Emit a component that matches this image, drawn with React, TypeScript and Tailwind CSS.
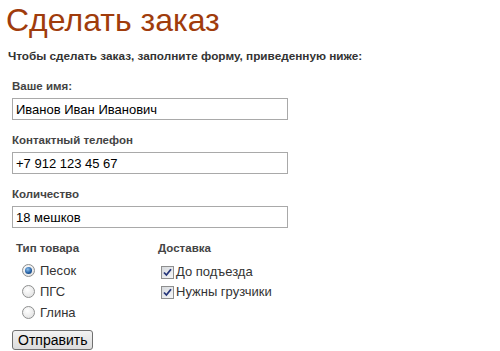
import React, { useState } from 'react'

// Radio in the old XP/Win7 look: grey ring, blue dot when picked
function Radio({ checked, label, onClick }: { checked: boolean; label: string; onClick: () => void }) {
  return (
    <label className="flex h-[21px] items-center cursor-pointer" onClick={onClick}>
      <span className="ml-[6px] flex h-[13px] w-[13px] items-center justify-center rounded-full border border-[#8e8f8f] bg-[radial-gradient(circle_at_40%_35%,#ffffff,#dcdcdc)]">
        {checked && (
          <span className="h-[7px] w-[7px] rounded-full bg-[radial-gradient(circle_at_40%_35%,#8ec2f0,#1f5a9e_60%,#10335f)]" />
        )}
      </span>
      <span className="ml-[5px] text-[13px] leading-[16px] text-[#333]">{label}</span>
    </label>
  )
}

function Check({ checked, label, onClick }: { checked: boolean; label: string; onClick: () => void }) {
  return (
    <label className="flex h-[20px] items-center cursor-pointer" onClick={onClick}>
      <span className="ml-[3px] flex h-[13px] w-[13px] items-center justify-center border border-[#8e8f8f] bg-[linear-gradient(135deg,#d6d9dd,#f6f7f8)]">
        {checked && (
          <svg width="9" height="9" viewBox="0 0 9 9">
            <path d="M1 4.5 L3.4 7 L8 1.2" fill="none" stroke="#26367a" strokeWidth="1.8" />
          </svg>
        )}
      </span>
      <span className="ml-[2px] text-[13px] leading-[16px] text-[#333]">{label}</span>
    </label>
  )
}

const fields = [
  { label: 'Ваше имя:', value: 'Иванов Иван Иванович' },
  { label: 'Контактный телефон', value: '+7 912 123 45 67' },
  { label: 'Количество', value: '18 мешков' },
]

export default function App() {
  const [kind, setKind] = useState('sand')
  const [toDoor, setToDoor] = useState(true)
  const [movers, setMovers] = useState(true)

  return (
    <div className="h-[351px] w-[500px] overflow-hidden bg-white font-['Liberation_Sans',Arial,sans-serif]">
      <h1 className="pl-[6px] pt-[2px] text-[32px] leading-[36px] font-normal text-[#a03c0c]">Сделать заказ</h1>
      <p className="mt-[10px] pl-[8px] text-[11.75px] leading-[16px] font-bold text-[#333]">
        Чтобы сделать заказ, заполните форму, приведенную ниже:
      </p>

      <form className="mt-[14px] pl-[12px]" onSubmit={(e) => e.preventDefault()}>
        {fields.map((f) => (
          <div key={f.label} className="mb-[12px]">
            <div className="text-[11.5px] leading-[16px] font-bold text-[#444]">{f.label}</div>
            <input
              defaultValue={f.value}
              className="mt-[4px] block h-[22px] w-[276px] border border-[#a9a9a9] px-[3px] text-[13px] leading-[16px] text-black outline-none"
            />
          </div>
        ))}

        <div className="mt-[12px] flex">
          <div className="w-[146px] pl-[4px]">
            <div className="text-[11.5px] leading-[16px] font-bold text-[#444]">Тип товара</div>
            <div className="mt-[4px]">
              <Radio checked={kind === 'sand'} label="Песок" onClick={() => setKind('sand')} />
              <Radio checked={kind === 'pgs'} label="ПГС" onClick={() => setKind('pgs')} />
              <Radio checked={kind === 'clay'} label="Глина" onClick={() => setKind('clay')} />
            </div>
          </div>
          <div>
            <div className="text-[11.5px] leading-[16px] font-bold text-[#444]">Доставка</div>
            <div className="mt-[6px]">
              <Check checked={toDoor} label="До подъезда" onClick={() => setToDoor(!toDoor)} />
              <Check checked={movers} label="Нужны грузчики" onClick={() => setMovers(!movers)} />
            </div>
          </div>
        </div>

        <button
          type="submit"
          className="mt-[7px] h-[20px] rounded-[3px] border border-[#707070] bg-[linear-gradient(#f2f2f2,#dcdcdc)] px-[5px] text-[14px] leading-[16px] text-black"
        >
          Отправить
        </button>
      </form>
    </div>
  )
}
